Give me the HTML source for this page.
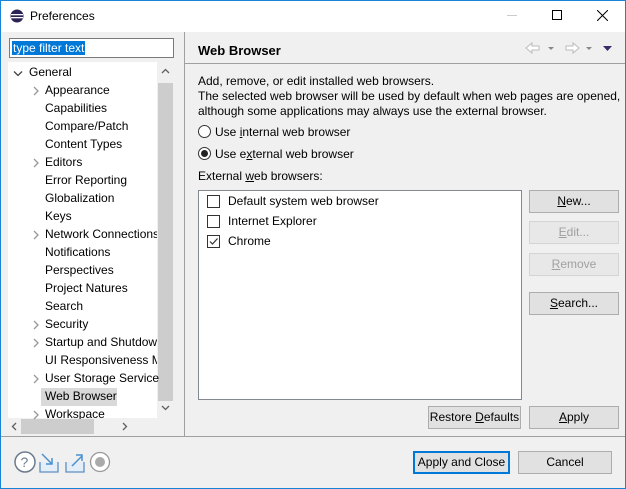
<!DOCTYPE html><html><head><style>
*{margin:0;padding:0;box-sizing:border-box}
body{width:626px;height:489px;overflow:hidden;background:#f0f0f0;font-family:"Liberation Sans",sans-serif;font-size:12px;color:#000;position:relative}
.a{position:absolute;white-space:nowrap}
.btn{position:absolute;background:#e1e1e1;border:1px solid #adadad;text-align:center;line-height:21px;height:23px}
.dis{color:#a0a0a0;border-color:#d4d4d4;background:#e8e8e8}
.t{position:absolute;left:45px;white-space:nowrap}
.ch{position:absolute;left:33px;width:6px;height:10px}
u{text-decoration:underline}
</style></head><body>
<div class="a" style="left:0;top:0;width:626px;height:489px;border:1px solid #1883d7;pointer-events:none;z-index:9"></div>
<div class="a" style="left:0;top:0;width:626px;height:32px;background:#fff"></div>
<svg class="a" style="left:10px;top:9px" width="14" height="14"><circle cx="7" cy="7" r="6.5" fill="#2c2255"/><rect x="1" y="5" width="12" height="1.3" fill="#fff"/><rect x="1" y="8" width="12" height="1.3" fill="#fff"/></svg>
<div class="a" style="left:30px;top:9px;font-size:12px">Preferences</div>
<div class="a" style="left:507px;top:15px;width:10px;height:1px;background:#ccc"></div>
<div class="a" style="left:552px;top:10px;width:10px;height:10px;border:1px solid #000"></div>
<svg class="a" style="left:597px;top:10px" width="11" height="11"><path d="M0 0L11 11M11 0L0 11" stroke="#000" stroke-width="1"/></svg>
<div class="a" style="left:9px;top:38px;width:165px;height:20px;background:#fff;border:1px solid #7a7a7a"></div>
<div class="a" style="left:12px;top:41px;background:#0078d7;color:#fff;line-height:14px;padding:0 1px">type filter text</div>
<div class="a" style="left:8px;top:62px;width:166px;height:356px;background:#fff"></div>
<div class="a" style="left:157px;top:62px;width:17px;height:356px;background:#f0f0f0"></div>
<div class="a" style="left:158px;top:83px;width:15px;height:318px;background:#cdcdcd"></div>
<svg class="a" style="left:161px;top:68px" width="9" height="6"><path d="M1 5L4.5 1.5L8 5" stroke="#606060" fill="none" stroke-width="1.3"/></svg>
<svg class="a" style="left:161px;top:405px" width="9" height="6"><path d="M1 1L4.5 4.5L8 1" stroke="#606060" fill="none" stroke-width="1.3"/></svg>
<div class="a" style="left:8px;top:418px;width:166px;height:17px;background:#f0f0f0"></div>
<div class="a" style="left:21px;top:419px;width:73px;height:15px;background:#cdcdcd"></div>
<svg class="a" style="left:11px;top:422px" width="6" height="9"><path d="M5 1L1.5 4.5L5 8" stroke="#606060" fill="none" stroke-width="1.3"/></svg>
<svg class="a" style="left:122px;top:422px" width="6" height="9"><path d="M1 1L4.5 4.5L1 8" stroke="#606060" fill="none" stroke-width="1.3"/></svg>
<svg class="a" style="left:13px;top:70px" width="10" height="7"><path d="M1 1.5L5 5.5L9 1.5" stroke="#444" fill="none" stroke-width="1.3"/></svg>
<div class="a" style="left:29px;top:65px">General</div>
<div class="a" style="left:41px;top:388px;width:76px;height:18px;background:#d9d9d9"></div>
<div style="position:absolute;left:0;top:83px">
<svg class="ch" style="top:3px"><path d="M1 1L5 5L1 9" stroke="#999" fill="none" stroke-width="1.3"/></svg><span class="t" style="top:0">Appearance</span>
<span class="t" style="top:18px">Capabilities</span>
<span class="t" style="top:36px">Compare/Patch</span>
<span class="t" style="top:54px">Content Types</span>
<svg class="ch" style="top:75px"><path d="M1 1L5 5L1 9" stroke="#999" fill="none" stroke-width="1.3"/></svg><span class="t" style="top:72px">Editors</span>
<span class="t" style="top:90px">Error Reporting</span>
<span class="t" style="top:108px">Globalization</span>
<span class="t" style="top:126px">Keys</span>
<svg class="ch" style="top:147px"><path d="M1 1L5 5L1 9" stroke="#999" fill="none" stroke-width="1.3"/></svg><span class="t" style="top:144px;width:112px;overflow:hidden">Network Connections</span>
<span class="t" style="top:162px">Notifications</span>
<span class="t" style="top:180px">Perspectives</span>
<span class="t" style="top:198px">Project Natures</span>
<span class="t" style="top:216px">Search</span>
<svg class="ch" style="top:237px"><path d="M1 1L5 5L1 9" stroke="#999" fill="none" stroke-width="1.3"/></svg><span class="t" style="top:234px">Security</span>
<svg class="ch" style="top:255px"><path d="M1 1L5 5L1 9" stroke="#999" fill="none" stroke-width="1.3"/></svg><span class="t" style="top:252px;width:112px;overflow:hidden">Startup and Shutdown</span>
<span class="t" style="top:270px;width:112px;overflow:hidden">UI Responsiveness Monitoring</span>
<svg class="ch" style="top:291px"><path d="M1 1L5 5L1 9" stroke="#999" fill="none" stroke-width="1.3"/></svg><span class="t" style="top:288px">User Storage Service</span>
<span class="t" style="top:306px">Web Browser</span>
<svg class="ch" style="top:327px"><path d="M1 1L5 5L1 9" stroke="#999" fill="none" stroke-width="1.3"/></svg><span class="t" style="top:324px;height:12px;overflow:hidden">Workspace</span>
</div>
<div class="a" style="left:184px;top:32px;width:1px;height:404px;background:#a0a0a0"></div>
<div class="a" style="left:185px;top:63px;width:441px;height:1px;background:#a0a0a0"></div>
<div class="a" style="left:198px;top:43px;font-weight:bold;font-size:13px">Web Browser</div>
<svg class="a" style="left:524px;top:41px" width="95" height="14">
<path d="M2 7L8 2V5H15V9H8V12Z" fill="#fff" stroke="#bbb"/>
<path d="M24 6h6l-3 3z" fill="#888"/>
<path d="M55 7L49 2V5H42V9H49V12Z" fill="#fff" stroke="#bbb"/>
<path d="M62 6h6l-3 3z" fill="#888"/>
<path d="M79 5h9l-4.5 5z" fill="#3d2b6a"/>
</svg>
<div class="a" style="left:198px;top:74px;line-height:15px">Add, remove, or edit installed web browsers.<br>The selected web browser will be used by default when web pages are opened,<br>although some applications may always use the external browser.</div>
<div class="a" style="left:198px;top:125px;width:13px;height:13px;border:1px solid #333;border-radius:50%;background:#fff"></div>
<div class="a" style="left:215px;top:125px">Use <u>i</u>nternal web browser</div>
<div class="a" style="left:198px;top:147px;width:13px;height:13px;border:1px solid #333;border-radius:50%;background:#fff"></div>
<div class="a" style="left:201px;top:150px;width:7px;height:7px;border-radius:50%;background:#222"></div>
<div class="a" style="left:215px;top:147px">Use e<u>x</u>ternal web browser</div>
<div class="a" style="left:198px;top:169px">External <u>w</u>eb browsers:</div>
<div class="a" style="left:198px;top:190px;width:324px;height:210px;background:#fff;border:1px solid #828790"></div>
<div class="a" style="left:207px;top:195px;width:13px;height:13px;border:1px solid #333;background:#fff"></div>
<div class="a" style="left:228px;top:194px">Default system web browser</div>
<div class="a" style="left:207px;top:215px;width:13px;height:13px;border:1px solid #333;background:#fff"></div>
<div class="a" style="left:228px;top:214px">Internet Explorer</div>
<div class="a" style="left:207px;top:235px;width:13px;height:13px;border:1px solid #333;background:#fff"></div>
<svg class="a" style="left:208px;top:236px" width="11" height="11"><path d="M2 5.5L4.5 8L9.5 2.5" stroke="#333" fill="none" stroke-width="1.2"/></svg>
<div class="a" style="left:228px;top:234px">Chrome</div>
<div class="btn" style="left:529px;top:190px;width:90px"><u>N</u>ew...</div>
<div class="btn dis" style="left:529px;top:221px;width:90px"><u>E</u>dit...</div>
<div class="btn dis" style="left:529px;top:253px;width:90px"><u>R</u>emove</div>
<div class="btn" style="left:529px;top:292px;width:90px"><u>S</u>earch...</div>
<div class="btn" style="left:428px;top:406px;width:93px">Restore <u>D</u>efaults</div>
<div class="btn" style="left:529px;top:406px;width:90px"><u>A</u>pply</div>
<div class="a" style="left:0;top:436px;width:626px;height:1px;background:#a0a0a0"></div>
<svg class="a" style="left:14px;top:450px" width="120" height="24">
<circle cx="11" cy="12" r="10" fill="#fff" stroke="#6b7b8c" stroke-width="1.5"/><text x="6.5" y="17" font-size="14" font-family="Liberation Sans" fill="#6b7b8c">?</text>
<path d="M26 12v10h18v-10" fill="#e3eef8" stroke="#5f8fc0" stroke-width="1.3"/><path d="M28 4l10 10M38 8v6h-6" stroke="#4a90d0" fill="none" stroke-width="1.5"/>
<path d="M52 12v10h18v-10" fill="#e3eef8" stroke="#5f8fc0" stroke-width="1.3"/><path d="M58 16l10-10M62 5h6v6" stroke="#4a90d0" fill="none" stroke-width="1.5"/>
<circle cx="86" cy="12" r="9.5" fill="#fff" stroke="#999" stroke-width="1.3"/><circle cx="86" cy="12" r="5" fill="#aaa"/>
</svg>
<div class="btn" style="left:413px;top:451px;width:97px;border:2px solid #0078d7;line-height:19px">Apply and Close</div>
<div class="btn" style="left:518px;top:451px;width:94px">Cancel</div>
</body></html>
